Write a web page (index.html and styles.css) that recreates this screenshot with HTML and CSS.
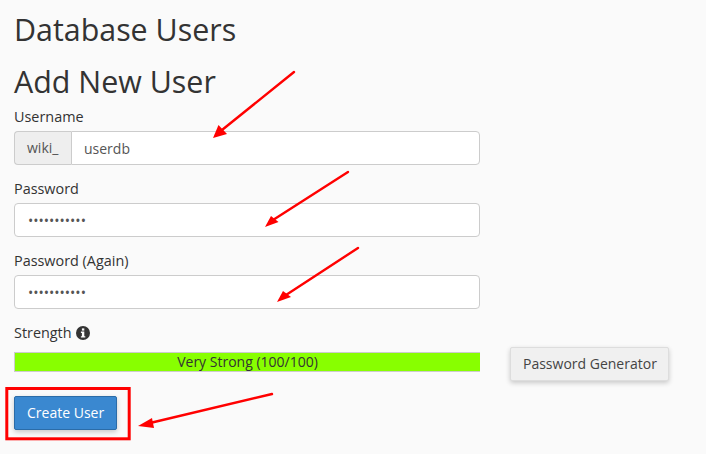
FILE: index.html
```html
<!DOCTYPE html>
<html lang="en">
<head>
    <meta charset="UTF-8">
    <meta name="viewport" content="width=device-width, initial-scale=1.0">
    <title>Database Users</title>
    <link rel="stylesheet" href="styles.css">
</head>
<body>
    <div class="container">
        <h1>Database Users</h1>
        <h2>Add New User</h2>
        <form class="user-form">
            <div class="form-group">
                <label for="username">Username</label>
                <div class="input-group">
                    <span class="input-prefix">wiki_</span>
                    <input id="username" class="form-control" type="text" value="userdb">
                </div>
            </div>
            <div class="form-group">
                <label for="password">Password</label>
                <input id="password" class="form-control" type="password" value="abcdefghijk">
            </div>
            <div class="form-group">
                <label for="password2">Password (Again)</label>
                <input id="password2" class="form-control" type="password" value="abcdefghijk">
            </div>
            <div class="strength-label">
                <span>Strength</span>
                <svg class="info-icon" viewBox="0 0 14 14" width="14" height="14" aria-hidden="true">
                    <circle cx="7" cy="7" r="7" fill="#333"/>
                    <rect x="5.9" y="2.4" width="2.4" height="2.2" fill="#fafafa"/>
                    <path d="M4.9 5.6h3.4v4.6h1v1.4H4.9v-1.4h1V7H4.9z" fill="#fafafa"/>
                </svg>
            </div>
            <div class="strength-row">
                <div class="strength-bar">Very Strong (100/100)</div>
                <button class="btn btn-default" type="button">Password Generator</button>
            </div>
            <button class="btn btn-primary" type="button">Create User</button>
        </form>
    </div>

    <svg class="annotations" viewBox="0 0 706 454" width="706" height="454" aria-hidden="true">
        <g stroke="#f00" stroke-width="2.4" stroke-linecap="round" fill="none">
            <path d="M294 72L222 130"/>
            <path d="M348 172L273 220"/>
            <path d="M358 248L286 295"/>
            <path d="M272 394L150 423"/>
        </g>
        <g fill="#f00">
            <path d="M213 138L218.500 125L227 134z"/>
            <path d="M265 227L271 216L278.500 222z"/>
            <path d="M277 302L283 291L291 297z"/>
            <path d="M138 426L152 418L154 428z"/>
        </g>
        <rect x="6.800" y="388.500" width="122.400" height="50.300" fill="none" stroke="#f00" stroke-width="3"/>
    </svg>
</body>
</html>
```

FILE: styles.css
```css
body { margin: 0; background: #fafafa; color: #333; font-family: "Open Sans", sans-serif; font-size: 14px; line-height: 20px; height: 454px; overflow: hidden; position: relative; }
.container { padding: 12px 14px 0; }
h1, h2 { margin: 0; font-size: 30.4px; font-weight: 400; line-height: 36px; }
h2 { margin-top: 16px; }
.user-form { margin-top: 7px; }
label { display: block; font-size: 14.4px; font-weight: 500; margin-bottom: 4px; }
.form-group { width: 466px; margin-bottom: 14px; }
.input-group { display: flex; }
.input-prefix { box-sizing: border-box; display: flex; align-items: center; flex: none; width: 57px; padding-left: 12px; background: #eee; color: #555; border: 1px solid #ccc; border-right: 0; border-radius: 4px 0 0 4px; }
.form-control { display: block; box-sizing: border-box; width: 100%; height: 34px; padding: 6px 13px; border: 1px solid #ccc; border-radius: 4px; background: #fff; color: #555; font: 14px/20px "Open Sans", sans-serif; min-width: 0; }
.input-group .form-control { padding-left: 12px; border-radius: 0 4px 4px 0; }
.strength-label { display: flex; align-items: center; gap: 4px; font-size: 14.4px; font-weight: 500; }
.strength-row { display: flex; align-items: flex-start; gap: 30px; margin-top: 9px; height: 29px; }
.strength-bar { box-sizing: border-box; width: 466px; height: 20px; background: #8f0; border: 1px solid #ccc; border-width: 1px 0 1px 1px; text-align: center; line-height: 18px; }
.btn { box-sizing: border-box; height: 34px; padding: 0 12px; border: 1px solid; border-radius: 2px; font: 14px/20px "Open Sans", sans-serif; box-shadow: 0 2px 5px rgba(0, 0, 0, 0.2); }
.btn-default { margin-top: -5px; padding: 0 11px 0 12px; background: #f0f0f0; border-color: #ddd; color: #444; }
.btn-primary { display: block; margin-top: 15px; background: #3a88d0; border-color: #2b6ca8; color: #fff; }
.annotations { position: absolute; left: 0; top: 0; pointer-events: none; }
```
